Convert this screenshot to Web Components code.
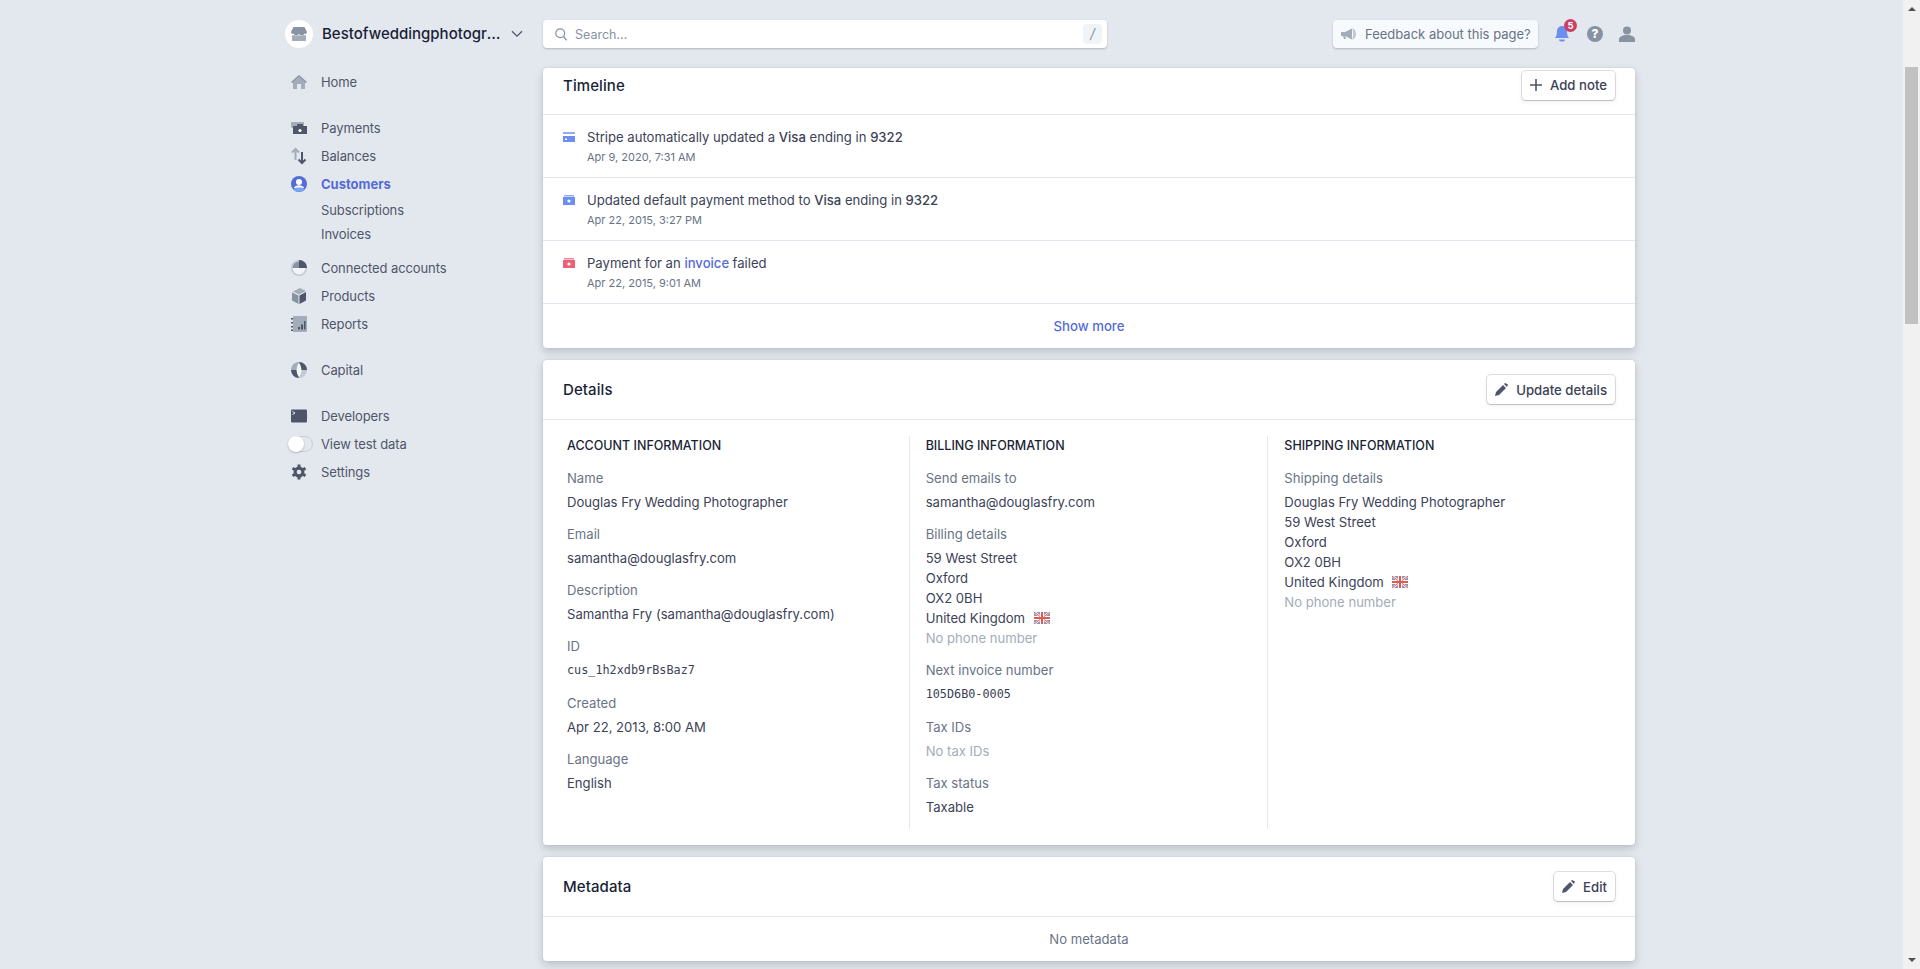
<!doctype html>
<html lang="en">
<head>
<meta charset="utf-8">
<title>Customer</title>
<style>
	html, body { margin: 0; height: 100%; overflow: hidden; background: #e3e8ee }
	body {
		font: 400 13.1px/20px Inter, "Noto Sans", sans-serif;
		color: #3c4257;
	}
	b { font-weight: 500; color: #3c4257 }
</style>
</head>
<body>

<app-shell>
	<side-nav slot="nav">
		<brand-switch>Bestofweddingphotographer.com</brand-switch>
		<nav-group>
			<nav-item icon="home">Home</nav-item>
		</nav-group>
		<nav-group>
			<nav-item icon="payments">Payments</nav-item>
			<nav-item icon="balances">Balances</nav-item>
			<nav-item icon="customers" active>Customers</nav-item>
			<nav-sub>Subscriptions</nav-sub>
			<nav-sub last>Invoices</nav-sub>
			<nav-item icon="connected">Connected accounts</nav-item>
			<nav-item icon="products">Products</nav-item>
			<nav-item icon="reports">Reports</nav-item>
		</nav-group>
		<nav-group>
			<nav-item icon="capital">Capital</nav-item>
		</nav-group>
		<nav-group>
			<nav-item icon="developers">Developers</nav-item>
			<nav-item icon="toggle">View test data</nav-item>
			<nav-item icon="settings">Settings</nav-item>
		</nav-group>
	</side-nav>

	<top-bar slot="main"></top-bar>

	<ui-card slot="main" heading="Timeline" scrolled>
		<ui-button slot="action" icon="plus">Add note</ui-button>
		<timeline-item icon="card">
			Stripe automatically updated a <b>Visa</b> ending in <b>9322</b>
			<span slot="when">Apr 9, 2020, 7:31 AM</span>
		</timeline-item>
		<timeline-item icon="pay">
			Updated default payment method to <b>Visa</b> ending in <b>9322</b>
			<span slot="when">Apr 22, 2015, 3:27 PM</span>
		</timeline-item>
		<timeline-item icon="fail">
			Payment for an <ui-link>invoice</ui-link> failed
			<span slot="when">Apr 22, 2015, 9:01 AM</span>
		</timeline-item>
		<show-more>Show more</show-more>
	</ui-card>

	<ui-card slot="main" heading="Details">
		<ui-button slot="action" icon="pencil">Update details</ui-button>
		<detail-grid>
			<detail-col heading="Account information">
				<detail-block label="Name">Douglas Fry Wedding Photographer</detail-block>
				<detail-block label="Email">samantha@douglasfry.com</detail-block>
				<detail-block label="Description">Samantha Fry (samantha@douglasfry.com)</detail-block>
				<detail-block label="ID" mono>cus_1h2xdb9rBsBaz7</detail-block>
				<detail-block label="Created">Apr 22, 2013, 8:00 AM</detail-block>
				<detail-block label="Language">English</detail-block>
			</detail-col>
			<detail-col heading="Billing information">
				<detail-block label="Send emails to">samantha@douglasfry.com</detail-block>
				<detail-block label="Billing details">
					59 West Street<br>Oxford<br>OX2 0BH<br>United Kingdom <uk-flag></uk-flag><br><ui-muted>No phone number</ui-muted>
				</detail-block>
				<detail-block label="Next invoice number" mono>105D6B0-0005</detail-block>
				<detail-block label="Tax IDs"><ui-muted>No tax IDs</ui-muted></detail-block>
				<detail-block label="Tax status">Taxable</detail-block>
			</detail-col>
			<detail-col heading="Shipping information" last>
				<detail-block label="Shipping details">
					Douglas Fry Wedding Photographer<br>59 West Street<br>Oxford<br>OX2 0BH<br>United Kingdom <uk-flag></uk-flag><br><ui-muted>No phone number</ui-muted>
				</detail-block>
			</detail-col>
		</detail-grid>
	</ui-card>

	<ui-card slot="main" heading="Metadata">
		<ui-button slot="action" icon="pencil">Edit</ui-button>
		<empty-note>No metadata</empty-note>
	</ui-card>

	<fake-scrollbar slot="bar"></fake-scrollbar>
</app-shell>

<script>
////////////////////////////////////////////////////////////////
const DARK = '#4f566b', MID = '#8792a2', LIGHT = '#a3acb9'

const svg = ( w, h, body ) =>
	`<svg width="${ w }" height="${ h }" viewBox="0 0 ${ w } ${ h }" aria-hidden="true">${ body }</svg>`

const NAV_ICONS = {
	home		: svg( 16, 16, `<path fill="${ LIGHT }" d="M2 8l6-5 6 5v7h-4v-5H6v5H2z"/><path fill="${ MID }" d="M8 1l8 7-1 1-7-6-7 6-1-1z"/>` )
,	payments	: svg( 16, 16, `<rect fill="${ LIGHT }" y="2" width="13" height="6" rx="1"/><path fill="${ DARK }" d="M2 6h4V5a1 1 0 0 1 1-1h4a1 1 0 0 1 1 1v1h4v8H2z"/><circle fill="#fff" cx="9" cy="10.5" r="1.6"/>` )
,	balances	: svg( 16, 18, `<path fill="none" stroke="${ LIGHT }" stroke-width="2" d="M4.5 13V2M1 5.5L4.5 2 8 5.5"/><path fill="none" stroke="${ DARK }" stroke-width="2" d="M11 5v11M7.5 12.5L11 16l3.5-3.5"/>` )
,	customers	: svg( 16, 16, `<circle fill="#556cd6" cx="8" cy="8" r="8"/><circle fill="#fff" cx="8" cy="6" r="3"/><path fill="#fff" d="M2.8 12c1-2 3-2.8 5.2-2.8s4.200.8 5.200 2.800z"/><path fill="#79a5f5" d="M2 13.200c1.500-1.400 3.600-1.800 6-1.800s4.500.4 6 1.800A8 8 0 0 1 2 13.200z"/>` )
,	connected	: svg( 16, 16, `<circle fill="#c1c9d2" cx="8" cy="8" r="8"/><circle fill="#f2f4f7" cx="8" cy="8" r="6.500"/><path fill="${ MID }" d="M1.500 8A6.500 6.500 0 0 1 8 1.500V8z"/><path fill="${ DARK }" d="M8 0a8 8 0 0 1 8 8H8z"/>` )
,	products	: svg( 16, 16, `<path fill="${ LIGHT }" d="M9 0l6 3-7 3.500L2 3.500z"/><path fill="${ MID }" d="M1 4.500l6.500 3V16L1 12.500z"/><path fill="${ DARK }" d="M15 4l-6.500 3.500V16l6.500-3.500z"/>` )
,	reports		: svg( 16, 16, `<rect fill="${ LIGHT }" x="2" width="14" height="16" rx="1"/><path fill="${ DARK }" d="M0 2h2v1.500H0zM0 6h2v1.500H0zM0 10h2v1.500H0zM0 13.500h2V15H0zM7 11h2v2.500H7zM10 8.500h2v5h-2zM13 5h1.500v8.500H13z"/>` )
,	capital		: svg( 16, 16, `<path fill="${ LIGHT }" d="M8 0a8 8 0 0 0-8 8h8z"/><path fill="${ DARK }" d="M0 8a8 8 0 0 0 8 8V8zM8 0a8 8 0 0 1 8 8H8z"/><path fill="#c1c9d2" d="M16 8a8 8 0 0 1-8 8V8z"/><path fill="#f2f4f7" d="M8 .5Q13 8 8 15.500 3 8 8 .5z"/>` )
,	developers	: svg( 16, 14, `<rect fill="${ DARK }" width="16" height="13" y=".5" rx="1"/><path fill="none" stroke="#e3e8ee" d="M1.500 2.500l2.500 1.500-2.500 1.500"/>` )
,	settings	: svg( 16, 16, `<path fill="none" stroke="${ DARK }" stroke-width="3" d="M8 .5v15M1.500 4.250l13 7.500M1.500 11.750l13-7.500"/><circle fill="${ DARK }" cx="8" cy="8" r="5.500"/><circle fill="#e3e8ee" cx="8" cy="8" r="2.300"/>` )
}

const BUTTON_ICONS = {
	plus	: svg( 12, 12, `<path stroke="${ DARK }" stroke-width="1.600" d="M6 0v12M0 6h12"/>` )
,	pencil	: svg( 13, 13, `<path fill="${ DARK }" d="M0 13l1-4 7-7 3 3-7 7zM9 1l1-1 3 1.500L12 4z"/>` )
}

const TIMELINE_ICONS = {
	card	: c => svg( 12, 10, `<rect fill="${ c }" width="12" height="2" opacity=".75"/><rect fill="${ c }" y="4" width="12" height="6"/><rect fill="#fff" x="2" y="6.500" width="2" height="1.500"/>` )
,	pay		: c => svg( 12, 10, `<rect fill="${ c }" x="1" width="10" height="1.500" opacity=".75"/><rect fill="${ c }" y="2" width="12" height="8"/><circle fill="#fff" cx="6" cy="6" r="1.600"/>` )
}

const define = ( name, html ) => (
	customElements.define( name, class extends HTMLElement {
		constructor() {
			super()
			this.attachShadow( { mode: 'open' } ).innerHTML = `<style>svg { display: block }</style>` + html( this )
		}
	} )
)

////////////////////////////////////////////////////////////////
define( 'app-shell', () => `
	<style>
		:host { display: flex; height: 969px; box-sizing: border-box; padding-left: 285px }
		.nav { flex: 0 0 258px }
		.main { flex: 0 0 1092px; display: flex; flex-direction: column }
		.gap { flex: 1 }
		::slotted( ui-card ) { margin-bottom: 12px }
	</style>
	<div class="nav"><slot name="nav"></slot></div>
	<div class="main"><slot name="main"></slot></div>
	<div class="gap"></div>
	<slot name="bar"></slot>
` )

define( 'fake-scrollbar', () => `
	<style>
		:host { flex: 0 0 17px; background: #f1f1f1; display: flex; flex-direction: column; align-items: center; height: 969px }
		.thumb { width: 13px; height: 257px; background: #c1c1c1; margin-top: 56px }
		.up, .down { width: 0; height: 0; border: 4px solid transparent; margin-top: 7px }
		.up { border-bottom: 4px solid #505050; border-top: 0 }
		.down { border-top: 4px solid #505050; border-bottom: 0; margin-top: auto; margin-bottom: 7px }
	</style>
	<div class="up"></div><div class="thumb"></div><div class="down"></div>
` )

define( 'side-nav', () => `
	<style>:host { display: block }</style>
	<slot></slot>
` )

define( 'brand-switch', () => `
	<style>
		:host { display: flex; align-items: center; height: 68px; font-size: 15px; font-weight: 500; color: #1a1f36; width: 240px }
		.logo { flex: none; width: 28px; height: 28px; border-radius: 50%; background: #fff; display: flex; align-items: center; justify-content: center; margin-right: 9px }
		.name { width: 179px; overflow: hidden; white-space: nowrap; text-overflow: ellipsis }
		.chev { margin-left: 10px }
	</style>
	<div class="logo">${ svg( 16, 16, `<path fill="${ MID }" d="M2.500 1h11L16 6a2 2 0 0 1-2.700 1.800A3 3 0 0 1 8 7.800a3 3 0 0 1-5.300 0A2 2 0 0 1 0 6z"/><path fill="${ LIGHT }" d="M1 9.200c1 .3 2 .2 2.800-.3 1.300 1 3 1 4.200 0 1.200 1 2.900 1 4.200 0 .8.500 1.800.6 2.800.3V15H1z"/>` ) }</div>
	<span class="name"><slot></slot></span>
	<span class="chev">${ svg( 12, 8, `<path fill="none" stroke="${ DARK }" stroke-width="1.300" d="M1 1.200l5 5 5-5"/>` ) }</span>
` )

define( 'nav-group', () => `
	<style>:host { display: block; margin-bottom: 18px }</style>
	<slot></slot>
` )

define( 'nav-item', el => {
	const icon = el.getAttribute( 'icon' )
	const glyph = icon == 'toggle'
		? `<span class="track"><span class="knob"></span></span>`
		: NAV_ICONS[ icon ]
	return `
		<style>
			:host { display: flex; align-items: center; height: 28px; font-size: 13px; letter-spacing: -.1px; color: #4f566b }
			:host( [active] ) { color: #556cd6; font-weight: 700; letter-spacing: 0 }
			.icon { flex: 0 0 16px; display: flex; align-items: center; margin: 0 14px 0 6px }
			.track { flex: none; width: 25px; height: 16px; box-sizing: border-box; border: 1px solid #c8cfd8; border-radius: 8px; position: relative; margin: 0 -6px 0 -3px }
			.knob { position: absolute; left: -1px; top: -1px; width: 16px; height: 16px; border-radius: 50%; background: #fff; box-shadow: 0 1px 2px rgba( 60, 66, 87, .3 ) }
		</style>
		<span class="icon">${ glyph }</span>
		<slot></slot>
	`
} )

define( 'nav-sub', () => `
	<style>
		:host { display: flex; align-items: center; height: 24px; padding-left: 36px; font-size: 13px; letter-spacing: -.1px; color: #4f566b }
		:host( [last] ) { margin-bottom: 8px }
	</style>
	<slot></slot>
` )

////////////////////////////////////////////////////////////////
define( 'top-bar', () => `
	<style>
		:host { display: flex; align-items: center; flex: 0 0 68px; height: 68px }
		.search { flex: 0 0 564px; height: 28px; box-sizing: border-box; background: #fff; border-radius: 4px; display: flex; align-items: center; padding: 0 5px 0 12px; font-size: 12.500px; color: ${ MID }; box-shadow: 0 1px 2px rgba( 60, 66, 87, .3 ) }
		.search svg { margin-right: 8px }
		.label { padding-top: 1px }
		.key { margin-left: auto; width: 19px; height: 20px; background: #f1f4f7; border-radius: 4px; display: flex; align-items: center; justify-content: center; font-size: 14px; font-style: italic; color: ${ MID } }
		.feedback { margin-left: auto; height: 28px; width: 205px; box-sizing: border-box; background: #f7fafc; border-radius: 4px; display: flex; align-items: center; padding-left: 8px; font-size: 13px; white-space: nowrap; color: #697386; box-shadow: 0 1px 2px rgba( 60, 66, 87, .3 ); margin-right: 17px }
		.feedback svg { margin-right: 9px }
		.bell { position: relative; width: 14px; height: 18px; margin-right: 18px }
		.badge { position: absolute; left: 9px; top: -6px; width: 13px; height: 13px; border-radius: 50%; background: #cd3d64; color: #fff; font: 700 9.500px/13px Inter, sans-serif; text-align: center }
		.help { width: 16px; height: 16px; border-radius: 50%; background: ${ MID }; color: #fff; font: 800 12px/16px Inter, sans-serif; text-align: center; margin-right: 16px }
	</style>
	<div class="search">
		${ svg( 12, 13, `<circle cx="5.200" cy="5.200" r="4.400" fill="none" stroke="${ MID }" stroke-width="1.200"/><path stroke="${ MID }" stroke-width="1.300" d="M8.500 8.500l3.200 3.800"/>` ) }
		<span class="label">Search...</span>
		<span class="key">/</span>
	</div>
	<div class="feedback">
		${ svg( 15, 12, `<path fill="${ LIGHT }" d="M0 4h4L11 .5v11L4 8l1 3H3L2 8H0z"/><path fill="#c1c9d2" d="M11 .5c2.500 0 4 2.500 4 5.500s-1.500 5.500-4 5.500C12.500 10 12.500 2 11 .5z"/>` ) }
		<span>Feedback about this page?</span>
	</div>
	<div class="bell">
		${ svg( 14, 18, `<path fill="#6c8eef" d="M7 1a5 5 0 0 1 5 5c0 4 .8 5.500 2 7H0c1.200-1.500 2-3 2-7a5 5 0 0 1 5-5zM4 14.500h6a3 2 0 0 1-6 0z"/>` ) }
		<span class="badge">5</span>
	</div>
	<div class="help">?</div>
	${ svg( 16, 16, `<circle fill="${ MID }" cx="8" cy="4.500" r="4"/><path fill="${ MID }" d="M0 16v-2.500C0 10.500 3.500 9 8 9s8 1.500 8 4.500V16z"/>` ) }
` )

define( 'ui-card', el => `
	<style>
		:host { display: block; background: #fff; border-radius: 4px; box-shadow: 0 0 0 1px rgba( 60, 66, 87, .04 ), 0 3px 6px rgba( 60, 66, 87, .14 ), 0 5px 12px rgba( 60, 66, 87, .10 ) }
		header { display: flex; align-items: center; justify-content: space-between; height: 59px; padding: 0 20px; border-bottom: 1px solid #e3e8ee }
		:host( [scrolled] ) header { height: 30px; padding: 2px 20px 14px }
		h2 { margin: 0; padding-top: 1px; font-size: 15px; letter-spacing: .1px; line-height: 24px; font-weight: 500; color: #1a1f36 }
	</style>
	<header>
		<h2>${ el.getAttribute( 'heading' ) }</h2>
		<slot name="action"></slot>
	</header>
	<slot></slot>
` )

define( 'ui-button', el => `
	<style>
		:host { display: inline-flex; align-items: center; height: 29px; padding: 0 8px; border-radius: 4px; background: #fff; font-size: 13.200px; font-weight: 500; color: #3c4257; box-shadow: 0 0 0 1px rgba( 60, 66, 87, .16 ), 0 1px 1px rgba( 0, 0, 0, .12 ), 0 2px 5px rgba( 60, 66, 87, .08 ) }
		span { margin-right: 8px }
	</style>
	<span>${ BUTTON_ICONS[ el.getAttribute( 'icon' ) ] }</span>
	<slot></slot>
` )

define( 'timeline-item', el => {
	const icon = el.getAttribute( 'icon' )
	const glyph = icon == 'card'
		? TIMELINE_ICONS.card( '#6c8eef' )
		: TIMELINE_ICONS.pay( icon == 'fail' ? '#ed5f74' : '#6c8eef' )
	return `
		<style>
			:host { display: flex; height: 62px; padding: 0 20px; border-bottom: 1px solid #e3e8ee }
			.icon { flex: 0 0 12px; margin: 17px 12px 0 0 }
			.title { padding-top: 12px }
			.when { font-size: 11px; line-height: 16px; color: #697386; margin-top: 2px }
		</style>
		<div class="icon">${ glyph }</div>
		<div>
			<div class="title"><slot></slot></div>
			<div class="when"><slot name="when"></slot></div>
		</div>
	`
} )

define( 'ui-link', () => `
	<style>:host { color: #556cd6; font-weight: 500 }</style>
	<slot></slot>
` )

define( 'ui-muted', () => `
	<style>:host { color: ${ LIGHT } }</style>
	<slot></slot>
` )

define( 'show-more', () => `
	<style>:host { display: flex; align-items: center; justify-content: center; height: 44px; font-size: 13.200px; color: #556cd6; font-weight: 500 }</style>
	<slot></slot>
` )

define( 'empty-note', () => `
	<style>:host { display: flex; align-items: center; justify-content: center; height: 44px; color: #697386 }</style>
	<slot></slot>
` )

define( 'detail-grid', () => `
	<style>:host { display: grid; grid-template-columns: repeat( 3, 1fr ); padding: 16px 8px }</style>
	<slot></slot>
` )

define( 'detail-col', el => `
	<style>
		:host { display: block; padding: 0 16px; border-right: 1px solid #e3e8ee }
		:host( [last] ) { border-right: 0 }
		h3 { margin: 0 0 12px; font-size: 12.500px; line-height: 20px; font-weight: 500; color: #1a1f36; text-transform: uppercase }
	</style>
	<h3>${ el.getAttribute( 'heading' ) }</h3>
	<slot></slot>
` )

define( 'detail-block', el => `
	<style>
		:host { display: block; margin-bottom: 12px }
		.label { color: #697386; margin-bottom: 4px }
		:host( [mono] ) .value { font: 400 11.800px/21px "DejaVu Sans Mono", monospace }
	</style>
	<div class="label">${ el.getAttribute( 'label' ) }</div>
	<div class="value"><slot></slot></div>
` )

define( 'uk-flag', () => `
	<style>:host { display: inline-block; height: 12px; vertical-align: 1px; margin: -2px 0 -2px 5px }</style>
	${ svg( 16, 12, `<rect width="16" height="12" fill="#fff"/>
		<path fill="#8a93b8" d="M0 1v3h4zM16 1v3h-4zM0 11V8h4zM16 11V8h-4zM2 0h4v3zM14 0h-4v3zM2 12h4V9zM14 12h-4V9z"/>
		<path stroke="#e25950" stroke-width="1" d="M0 0l6 4.500M16 0l-6 4.500M0 12l6-4.500M16 12l-6-4.500"/>
		<path stroke="#e25950" stroke-width="2" d="M8 0v12M0 6h16"/>` ) }
` )
</script>
</body>
</html>
